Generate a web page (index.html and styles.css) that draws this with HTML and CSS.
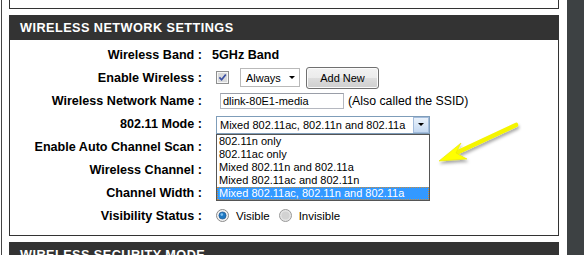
FILE: index.html
```html
<!DOCTYPE html>
<html lang="en">
<head>
    <meta charset="UTF-8">
    <meta name="viewport" content="width=device-width, initial-scale=1.0">
    <title>Wireless Settings</title>
    <link rel="stylesheet" href="styles.css">
</head>
<body>
    <div class="shell">
        <div class="edge"></div>
        <div class="column">
            <div class="topbox"></div>

            <section class="panel">
                <h2 class="panel-title">WIRELESS NETWORK SETTINGS</h2>
                <div class="panel-body">
                    <div class="row">
                        <span class="label">Wireless Band :</span>
                        <span class="strong">5GHz Band</span>
                    </div>
                    <div class="row">
                        <span class="label">Enable Wireless :</span>
                        <svg class="check" viewBox="0 0 13 13" width="13" height="13">
                            <rect x="0.5" y="0.5" width="12" height="12" fill="#f6f6f6" stroke="#8e8f8f"/>
                            <rect x="2" y="2" width="9" height="9" fill="#d9dadb"/>
                            <path d="M3.4 6.4 L5.6 8.8 L9.8 3.4" fill="none" stroke="#3a4fa2" stroke-width="1.7"/>
                        </svg>
                        <div class="combo combo-always">
                            <span>Always</span>
                            <span class="caret"></span>
                        </div>
                        <button class="btn" type="button">Add New</button>
                    </div>
                    <div class="row">
                        <span class="label">Wireless Network Name :</span>
                        <div class="field">dlink-80E1-media</div>
                        <span class="hint">(Also called the SSID)</span>
                    </div>
                    <div class="row">
                        <span class="label">802.11 Mode :</span>
                        <div class="combo combo-mode">
                            <span>Mixed 802.11ac, 802.11n and 802.11a</span>
                            <span class="combo-btn"><span class="caret"></span></span>
                            <div class="listbox">
                                <div class="option">802.11n only</div>
                                <div class="option">802.11ac only</div>
                                <div class="option">Mixed 802.11n and 802.11a</div>
                                <div class="option">Mixed 802.11ac and 802.11n</div>
                                <div class="option selected">Mixed 802.11ac, 802.11n and 802.11a</div>
                            </div>
                        </div>
                    </div>
                    <div class="row">
                        <span class="label">Enable Auto Channel Scan :</span>
                    </div>
                    <div class="row">
                        <span class="label">Wireless Channel :</span>
                    </div>
                    <div class="row">
                        <span class="label">Channel Width :</span>
                    </div>
                    <div class="row">
                        <span class="label">Visibility Status :</span>
                        <svg class="radio" viewBox="0 0 13 13" width="13" height="13">
                            <circle cx="6.5" cy="6.5" r="6" fill="#f2f2f2" stroke="#8a8a8a"/>
                            <circle cx="6.5" cy="6.5" r="3.6" fill="#1f78c1" stroke="#1b4e86" stroke-width="0.6"/>
                            <circle cx="5.8" cy="5.6" r="1.3" fill="#7fc0f0"/>
                        </svg>
                        <span class="radio-text">Visible</span>
                        <svg class="radio radio-off" viewBox="0 0 13 13" width="13" height="13">
                            <circle cx="6.5" cy="6.5" r="6" fill="#e4e4e4" stroke="#9a9a9a"/>
                            <circle cx="6.5" cy="6.5" r="4" fill="#d2d2d2"/>
                        </svg>
                        <span class="radio-text">Invisible</span>
                    </div>

                    <svg class="arrow" viewBox="0 0 88 48" width="88" height="48">
                        <defs>
                            <filter id="shade" x="-20%" y="-20%" width="140%" height="160%">
                                <feDropShadow dx="1" dy="2.5" stdDeviation="1.5" flood-color="#000" flood-opacity="0.35"/>
                            </filter>
                        </defs>
                        <g filter="url(#shade)">
                            <line x1="20" y1="33" x2="80" y2="5" stroke="#f5f500" stroke-width="4.6" stroke-linecap="round"/>
                            <polygon points="3,41 25,23 20,33 31,39" fill="#ffff00" stroke="#e6e600" stroke-width="0.6" stroke-linejoin="round"/>
                        </g>
                    </svg>
                </div>
            </section>

            <section class="panel">
                <h2 class="panel-title">WIRELESS SECURITY MODE</h2>
                <div class="panel-body"></div>
            </section>
        </div>
        <div class="rail"></div>
    </div>
</body>
</html>
```

FILE: styles.css
```css
body {
    margin: 0;
    background-color: #fff;
    font-family: "Liberation Sans", Arial, sans-serif;
    font-size: 11px;
    color: #000;
    overflow: hidden;
}
.shell {
    display: flex;
    height: 255px;
    overflow: hidden;
}
.edge {
    flex: none;
    width: 1px;
    margin-left: 1px;
    background-color: #444;
}
.column {
    flex: none;
    width: 550px;
    margin-left: 7px;
}
.rail {
    flex: none;
    width: 17px;
    margin-left: 8px;
    background-color: #3d4143;
}
.topbox {
    height: 8px;
    border: 1px solid #333;
    border-top: 0;
}
.panel {
    margin-top: 6px;
}
.panel-title {
    margin: 0;
    height: 25px;
    box-sizing: border-box;
    padding: 2px 0 0 11px;
    line-height: 23px;
    background-color: #333;
    color: #fff;
    font-size: 12.7px;
    font-weight: bold;
    letter-spacing: 0.45px;
}
.panel-body {
    position: relative;
    border: 1px solid #333;
    border-top: 0;
    padding: 3px 0 8px;
}
.row {
    display: flex;
    align-items: center;
    height: 23px;
}
.label {
    flex: none;
    width: 192px;
    margin-right: 10px;
    text-align: right;
    font-weight: bold;
    font-size: 12.6px;
}
.strong {
    font-weight: bold;
    font-size: 12.6px;
}
.check {
    flex: none;
    margin-left: 4px;
}
.combo {
    position: relative;
    display: flex;
    align-items: center;
    box-sizing: border-box;
    background-color: #fff;
    font-size: 11px;
    white-space: nowrap;
}
.caret {
    width: 0;
    height: 0;
    border-left: 3px solid transparent;
    border-right: 3px solid transparent;
    border-top: 3px solid #000;
}
.combo-always {
    margin-left: 11px;
    width: 60px;
    height: 19px;
    padding-left: 5px;
    border: 1px solid #b9b9b9;
}
.combo-always .caret {
    margin-left: auto;
    margin-right: 4px;
}
.btn {
    margin-left: 6px;
    width: 73px;
    height: 22px;
    padding: 0;
    border: 1px solid #707070;
    border-radius: 3px;
    background: linear-gradient(#f2f2f2 0%, #ebebeb 50%, #dddddd 50%, #cfcfcf 100%);
    box-shadow: inset 0 0 0 1px #fbfbfb;
    font-family: "Liberation Sans", Arial, sans-serif;
    font-size: 11px;
    color: #000;
}
.field {
    margin-left: 8px;
    width: 124px;
    height: 16px;
    box-sizing: border-box;
    padding-left: 2px;
    border: 1px solid #b5b8c0;
    border-top-color: #9a9ea8;
    font-size: 11px;
    line-height: 14px;
}
.hint {
    margin-left: 4px;
    font-size: 12.3px;
}
.combo-mode {
    margin-left: 4px;
    margin-top: 2px;
    width: 214px;
    height: 18px;
    padding-left: 3px;
    border: 1px solid #7f9db9;
}
.combo-btn {
    margin-left: auto;
    width: 16px;
    height: 16px;
    box-sizing: border-box;
    display: flex;
    align-items: center;
    justify-content: center;
    border: 1px solid #a3bcdc;
    background: linear-gradient(#eaf2fb, #c4d9f2);
}
.listbox {
    position: absolute;
    top: calc(100% + 1px);
    left: -1px;
    width: 214px;
    box-sizing: border-box;
    border: 1px solid #555;
    background-color: #fff;
    z-index: 2;
}
.option {
    height: 13px;
    line-height: 13px;
    padding-left: 2px;
}
.option.selected {
    background-color: #3399ff;
    color: #fff;
    outline: 1px dotted #c98b3a;
    outline-offset: -1px;
}
.radio {
    flex: none;
    margin-left: 4px;
}
.radio-off {
    margin-left: 9px;
}
.radio-text {
    margin-left: 7px;
    font-size: 11.5px;
}
.arrow {
    position: absolute;
    left: 426px;
    top: 80px;
    overflow: visible;
    z-index: 3;
}
```
